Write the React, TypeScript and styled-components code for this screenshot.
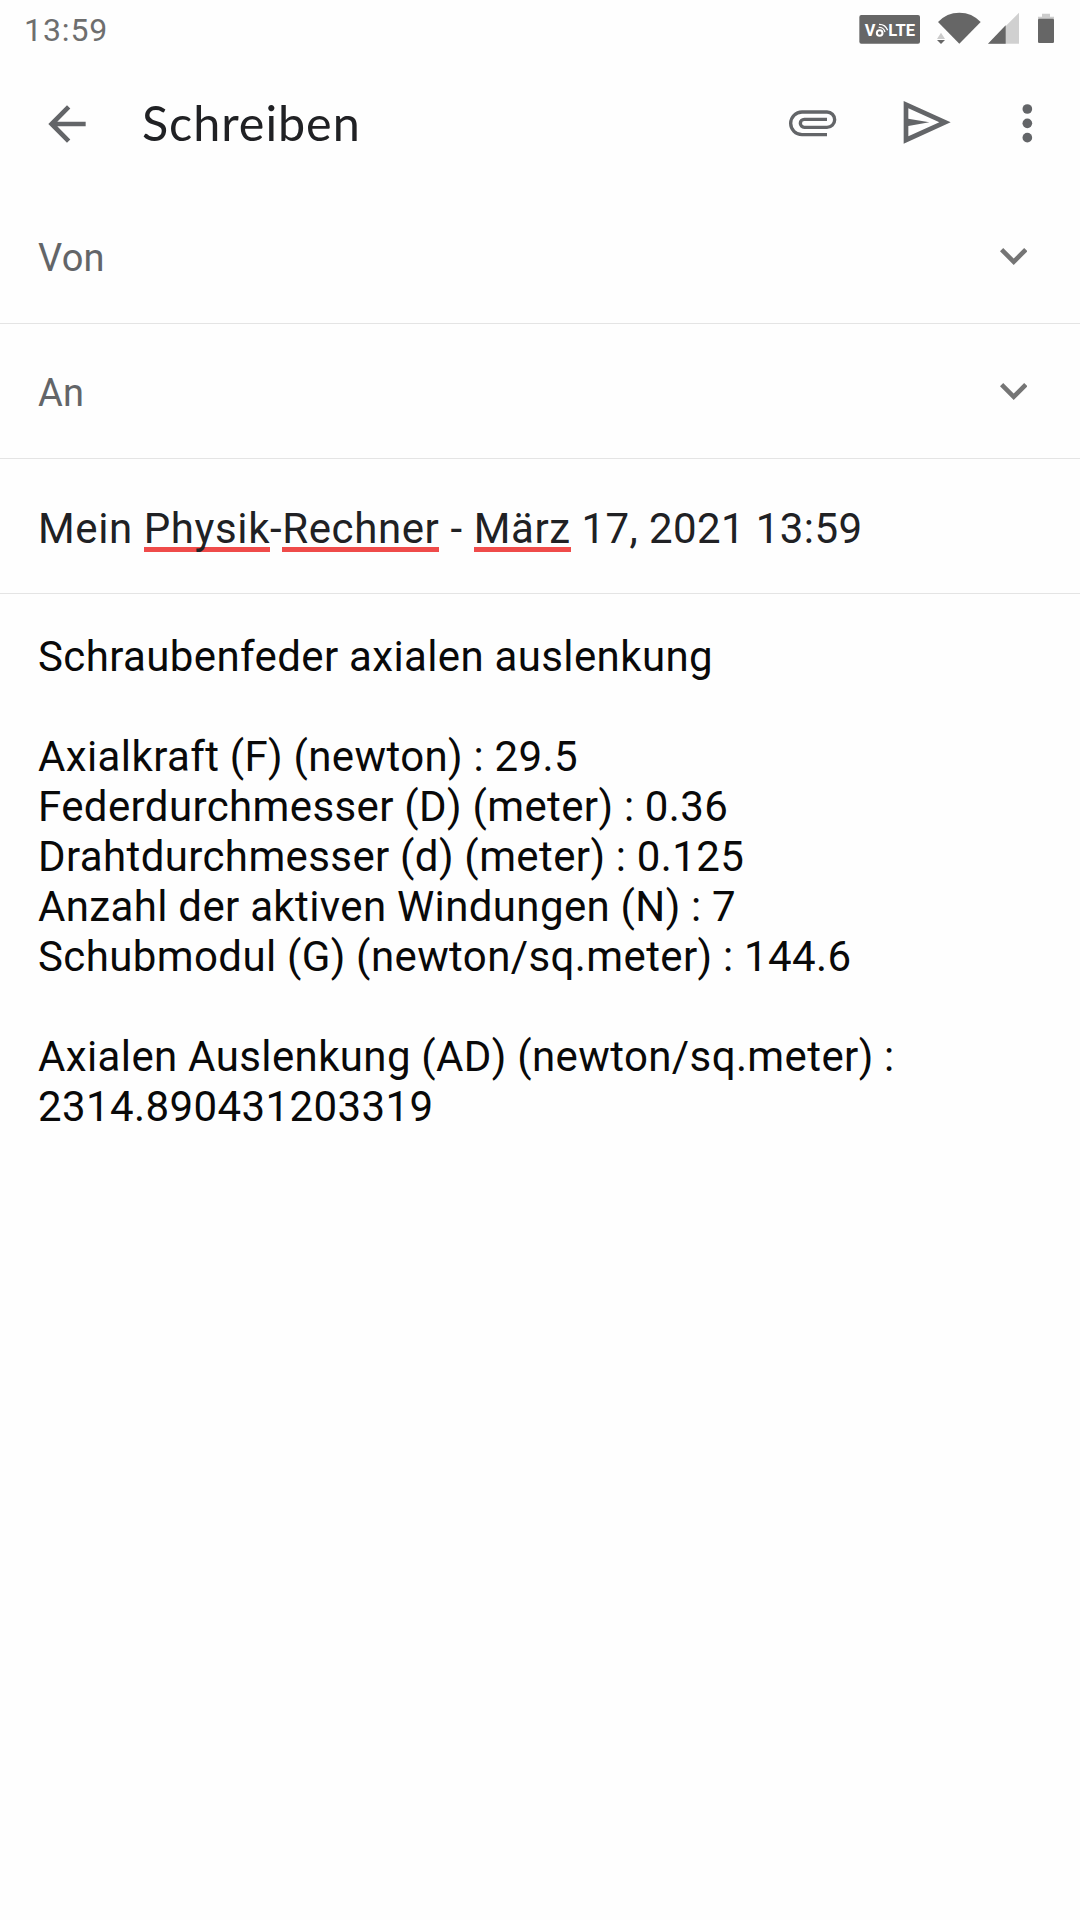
import React from "react";
import styled, { createGlobalStyle } from "styled-components";

const GlobalStyle = createGlobalStyle`
  * { box-sizing: border-box; }
  body { margin: 0; background: #fefefe; }
`;

const Screen = styled.div`
  display: flex;
  flex-direction: column;
  width: 1080px;
  height: 1920px;
  overflow: hidden;
  background: #fefefe;
  color: #202124;
  font-family: Roboto, "Liberation Sans", sans-serif;
`;

const StatusBar = styled.div`
  display: flex;
  align-items: center;
  justify-content: space-between;
  height: 60px;
  padding: 0 0 0 24px;
`;

const Clock = styled.span`
  font-size: 32px;
  line-height: 38px;
  letter-spacing: 0.9px;
  color: #6e6e6e;
`;

const AppBar = styled.header`
  display: flex;
  align-items: center;
  height: 129px;
  padding: 0 0 1px 39px;
`;

const Title = styled.h1`
  flex: 1;
  margin: 0;
  padding: 0 0 5px 47px;
  font-family: Lato, sans-serif;
  font-size: 48.5px;
  line-height: 58px;
  font-weight: 400;
  letter-spacing: 0.95px;
  color: #202124;
`;

const Icon = styled.svg`
  display: block;
  flex: none;
`;

const Row = styled.div`
  display: flex;
  align-items: center;
  justify-content: space-between;
  height: 135px;
  padding: 0 53px 0 38px;
  border-bottom: 1px solid #e4e4e4;
`;

const Label = styled.span`
  padding-top: 4px;
  font-size: 38px;
  line-height: 44px;
  letter-spacing: 0.3px;
  color: #636568;
`;

const Subject = styled.span`
  display: flex;
  white-space: pre;
  font-size: 42px;
  line-height: 50px;
  letter-spacing: 0.6px;
  padding-top: 5px;
`;

const Timestamp = styled.span`
  letter-spacing: 0.4px;
`;

const Misspelled = styled.span`
  background: linear-gradient(#ef4b4a, #ef4b4a) 0 43px / 100% 5px no-repeat;
`;

const Message = styled.main`
  padding: 38px 38px 0;
  font-size: 42px;
  line-height: 50px;
  letter-spacing: 0.39px;
  word-spacing: -0.4px;
  white-space: pre-wrap;
  color: #090909;
`;

const GREY = "#636568";

const StatusIcons = () => (
  <Icon width="240" height="60" viewBox="0 0 720 180">
    <rect x="58" y="45" width="182" height="86" rx="6" fill="#666" />
    <g fill="#fff" fontFamily="Roboto, sans-serif" fontWeight="700" fontSize="50">
      <text x="74" y="109" textLength="32" lengthAdjust="spacingAndGlyphs">V</text>
      <text x="145" y="109" textLength="80" lengthAdjust="spacingAndGlyphs">LTE</text>
    </g>
    <g fill="none" stroke="#fff">
      <circle cx="119" cy="99" r="8.5" strokeWidth="6" />
      <path d="M116 82a18 18 0 0 1 19 14" strokeWidth="4" />
      <path d="M117 73a27 27 0 0 1 26 18" strokeWidth="4" />
    </g>
    <path d="M291 117L303 98L315 117Z" fill="#ccc" />
    <path d="M291 120H315L303 132Z" fill="#666" />
    <path d="M358 131L294 66Q320 38 358 38T422 66Z" fill="#666" />
    <path d="M444 131L537 38V131Z" fill="#d0d0d0" />
    <path d="M444 131L497 76V131Z" fill="#666" />
    <path d="M606 41H630V50H642V58H594V50H606Z" fill="#ccc" />
    <rect x="594" y="56" width="48" height="73" rx="4" fill="#666" />
  </Icon>
);

const BackIcon = () => (
  <Icon width="56" height="56" viewBox="0 0 24 24">
    <path fill={GREY} d="M20 11H7.83l5.59-5.59L12 4l-8 8 8 8 1.41-1.41L7.83 13H20v-2z" />
  </Icon>
);

const Actions = () => (
  <Icon width="320" height="90" viewBox="0 0 960 270">
    <path
      d="M201 167H126a34 34 0 0 1 0-68H201a23 23 0 0 1 0 46H133a12 12 0 0 1 0-24H201"
      fill="none"
      stroke={GREY}
      strokeWidth="10"
    />
    <path
      fillRule="evenodd"
      fill={GREY}
      d="M431 66L572 130L431 194ZM445 88V119L508 130L445 141V172L538 130Z"
    />
    <g fill={GREY}>
      <circle cx="802" cy="90" r="14.5" />
      <circle cx="802" cy="133" r="14.5" />
      <circle cx="802" cy="176" r="14.5" />
    </g>
  </Icon>
);

const Chevron = () => (
  <Icon width="27.4" height="17" viewBox="6 8.59 12 7.41">
    <path fill="#757575" d="M16.59 8.59L12 13.17 7.41 8.59 6 10l6 6 6-6z" />
  </Icon>
);

const message = `Schraubenfeder axialen auslenkung

Axialkraft (F) (newton) : 29.5
Federdurchmesser (D) (meter) : 0.36
Drahtdurchmesser (d) (meter) : 0.125
Anzahl der aktiven Windungen (N) : 7
Schubmodul (G) (newton/sq.meter) : 144.6

Axialen Auslenkung (AD) (newton/sq.meter) : 2314.890431203319`;

export default function App() {
  return (
    <Screen>
      <GlobalStyle />
      <StatusBar>
        <Clock>13:59</Clock>
        <StatusIcons />
      </StatusBar>
      <AppBar>
        <BackIcon />
        <Title>Schreiben</Title>
        <Actions />
      </AppBar>
      <Row>
        <Label>Von</Label>
        <Chevron />
      </Row>
      <Row>
        <Label>An</Label>
        <Chevron />
      </Row>
      <Row>
        <Subject>
          Mein <Misspelled>Physik</Misspelled>-<Misspelled>Rechner</Misspelled> - <Misspelled>März</Misspelled>
          <Timestamp> 17, 2021 13:59</Timestamp>
        </Subject>
      </Row>
      <Message>{message}</Message>
    </Screen>
  );
}
